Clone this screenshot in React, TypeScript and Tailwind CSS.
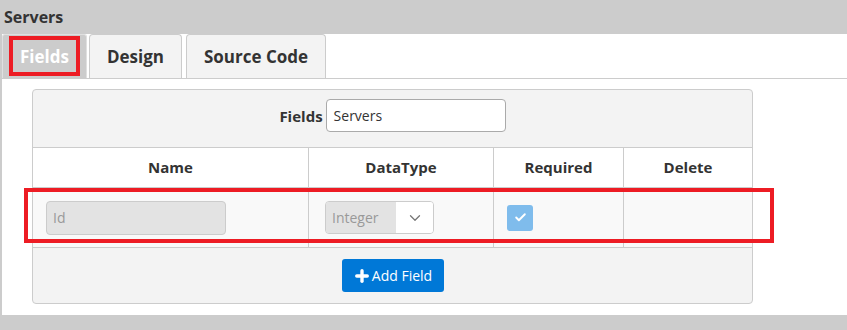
import { Plus, ChevronDown, Check } from "lucide-react";

const columns = [
  { label: "Name", width: "w-[276px]" },
  { label: "DataType", width: "w-[185px]" },
  { label: "Required", width: "w-[130px]" },
  { label: "Delete", width: "w-[128px]" },
];

function Tabs() {
  return (
    <div className="flex items-end h-[45px] pt-[1px] border-b border-[#cccccc]">
      <div className="relative w-[85px] h-[44px] bg-[#cccccc] border border-[#e0e0e0] border-b-0 rounded-t-[3px] flex items-center justify-center text-white font-bold text-[17px]">
        Fields
        {/* highlight annotation */}
        <div className="absolute left-[6px] top-[1px] w-[71px] h-[40px] border-[4px] border-[#ed1c24]"></div>
      </div>
      <div className="ml-[2px] w-[93px] h-[44px] bg-[#f3f3f3] border border-[#cccccc] border-b-0 rounded-t-[4px] flex items-center justify-center text-[#333333] font-bold text-[17px]">
        Design
      </div>
      <div className="ml-[4px] w-[140px] h-[44px] bg-[#f3f3f3] border border-[#cccccc] border-b-0 rounded-t-[4px] flex items-center justify-center text-[#333333] font-bold text-[17px]">
        Source Code
      </div>
    </div>
  );
}

function FieldsPanel() {
  return (
    <div className="ml-[30px] mt-[10px] w-[721px] bg-[#f3f3f3] border border-[#cccccc] rounded-[4px]">
      <div className="h-[58px] border-b border-[#cccccc] flex justify-center items-start pt-[9px]">
        <span className="mt-[6px] mr-[3px] font-bold text-[15px] text-[#333333]">Fields</span>
        <div className="w-[180px] h-[33px] bg-white border border-[#aaaaaa] rounded-[4px] flex items-center px-[7px] text-[14px] text-[#333333]">
          Servers
        </div>
      </div>

      <div className="flex h-[40px] bg-white border-b border-[#cccccc]">
        {columns.map((col, i) => (
          <div
            key={col.label}
            className={`${col.width} flex items-center justify-center font-bold text-[15px] text-[#333333] ${i < columns.length - 1 ? "border-r border-[#cccccc]" : ""}`}
          >
            {col.label}
          </div>
        ))}
      </div>

      <div className="relative flex h-[60px] bg-[#f9f9f9] border-b border-[#cccccc]">
        <div className="w-[276px] border-r border-[#cccccc] flex items-center pl-[13px]">
          <div className="w-[180px] h-[34px] bg-[#e3e3e3] border border-[#cccccc] rounded-[4px] flex items-center px-[6px] text-[14px] text-[#999999]">
            Id
          </div>
        </div>
        <div className="w-[185px] border-r border-[#cccccc] flex items-center pl-[16px]">
          <div className="w-[109px] h-[33px] flex border border-[#cccccc] rounded-[4px] overflow-hidden">
            <div className="flex-1 bg-[#e3e3e3] flex items-center px-[6px] text-[14px] text-[#999999]">Integer</div>
            <div className="w-[37px] bg-white flex items-center justify-center text-[#777777]">
              <ChevronDown size={18} strokeWidth={1.75} />
            </div>
          </div>
        </div>
        <div className="w-[130px] border-r border-[#cccccc] flex items-center pl-[13px]">
          <div className="w-[26px] h-[26px] rounded-[3px] bg-[#7fbcec] flex items-center justify-center text-white">
            <Check size={13} strokeWidth={3.5} />
          </div>
        </div>
        <div className="w-[128px]"></div>
        {/* highlight annotation */}
        <div className="absolute -left-[9px] -right-[22px] top-0 bottom-[4px] border-[4px] border-[#ed1c24] pointer-events-none"></div>
      </div>

      <div className="h-[55px] flex items-center justify-center">
        <button className="w-[102px] h-[33px] bg-[#0078d7] rounded-[3px] flex items-center justify-center text-white text-[14px]">
          <Plus size={18} strokeWidth={4.5} className="mr-[1px]" />
          Add Field
        </button>
      </div>
    </div>
  );
}

export default function App() {
  return (
    <div className="w-[847px] h-[330px] bg-[#cccccc] font-['Open_Sans',sans-serif] overflow-hidden">
      <div className="h-[34px] flex items-center pl-[4px] font-bold text-[16px] text-[#333333]">Servers</div>
      <div className="ml-[2px] h-[281px] bg-white">
        <Tabs />
        <FieldsPanel />
      </div>
    </div>
  );
}
